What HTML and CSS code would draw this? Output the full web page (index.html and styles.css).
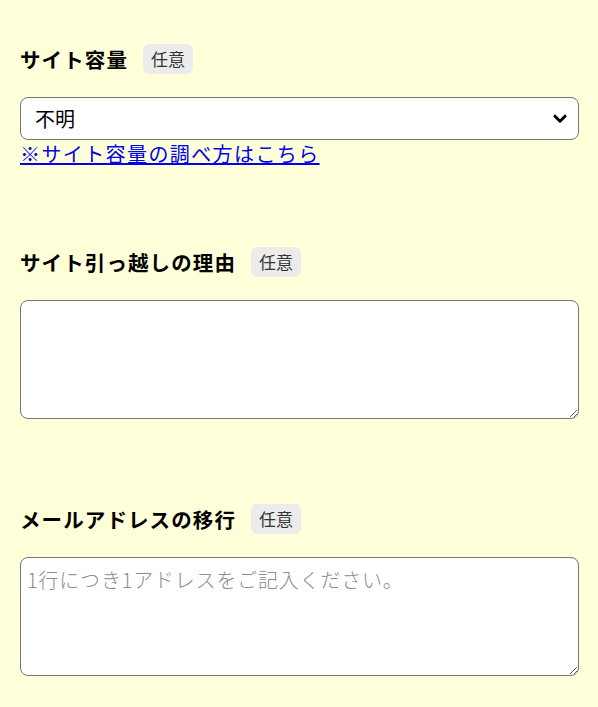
FILE: index.html
```html
<!DOCTYPE html>
<html lang="ja">
<head>
<meta charset="utf-8">
<title>フォーム</title>
<link rel="stylesheet" href="styles.css">
</head>
<body>
<form class="form">
  <div class="group">
    <div class="group-head">
      <span class="label">サイト容量</span>
      <span class="badge">任意</span>
    </div>
    <div class="select-wrap">
      <select class="select">
        <option>不明</option>
      </select>
      <svg class="chevron" width="14" height="10" viewBox="0 0 14 10" aria-hidden="true">
        <path d="M2 2.2 L7 7.2 L12 2.2" fill="none" stroke="#000" stroke-width="3" stroke-linecap="round" stroke-linejoin="round"/>
      </svg>
    </div>
    <a class="note" href="#">※サイト容量の調べ方はこちら</a>
  </div>
  <div class="group">
    <div class="group-head">
      <span class="label">サイト引っ越しの理由</span>
      <span class="badge">任意</span>
    </div>
    <div class="area-wrap">
      <textarea class="area"></textarea>
    </div>
  </div>
  <div class="group">
    <div class="group-head">
      <span class="label">メールアドレスの移行</span>
      <span class="badge">任意</span>
    </div>
    <div class="area-wrap">
      <textarea class="area" placeholder="1行につき1アドレスをご記入ください。"></textarea>
    </div>
  </div>
</form>
</body>
</html>
```

FILE: styles.css
```css
html, body {
  margin: 0;
  padding: 0;
  background: #ffffda;
}

body {
  font-family: "Noto Sans CJK JP", "Noto Sans", sans-serif;
  color: #000;
}

.form {
  display: flex;
  flex-direction: column;
  gap: 82px;
  padding: 44px 19px 0 20px;
}

.group {
  display: flex;
  flex-direction: column;
}

.group-head {
  display: flex;
  align-items: center;
  gap: 15px;
  height: 30px;
  margin-bottom: 23px;
}

.label {
  font-size: 20.5px;
  font-weight: 700;
  letter-spacing: 1.1px;
  line-height: 30px;
}

.badge {
  display: inline-block;
  height: 30px;
  line-height: 30px;
  padding: 0 8px;
  font-size: 17px;
  color: #333;
  background: #ececec;
  border-radius: 6px;
}

.select-wrap {
  position: relative;
  height: 43px;
}

.select {
  appearance: none;
  -webkit-appearance: none;
  box-sizing: border-box;
  width: 100%;
  height: 43px;
  margin: 0;
  padding: 0 40px 0 14px;
  font-family: "Noto Sans CJK JP", "Noto Sans", sans-serif;
  font-size: 20px;
  color: #000;
  background: #fff;
  border: 1px solid #767676;
  border-radius: 8px;
}

.chevron {
  position: absolute;
  right: 12px;
  top: 17px;
  pointer-events: none;
}

.note {
  display: block;
  margin-top: 3px;
  font-size: 20px;
  line-height: 22px;
  letter-spacing: 1.4px;
  color: #0000ee;
  text-decoration: underline;
}

.area-wrap {
  padding-bottom: 3px;
}

.area {
  display: block;
  box-sizing: border-box;
  width: 100%;
  height: 119px;
  margin: 0;
  padding: 7px 6px;
  font-family: "Noto Sans CJK JP", "Noto Sans", sans-serif;
  font-size: 20px;
  font-weight: 300;
  letter-spacing: 0.8px;
  background: #fff;
  border: 1px solid #767676;
  border-radius: 8px;
}

.area::placeholder {
  color: #8c8c8c;
  font-weight: 300;
}
```
